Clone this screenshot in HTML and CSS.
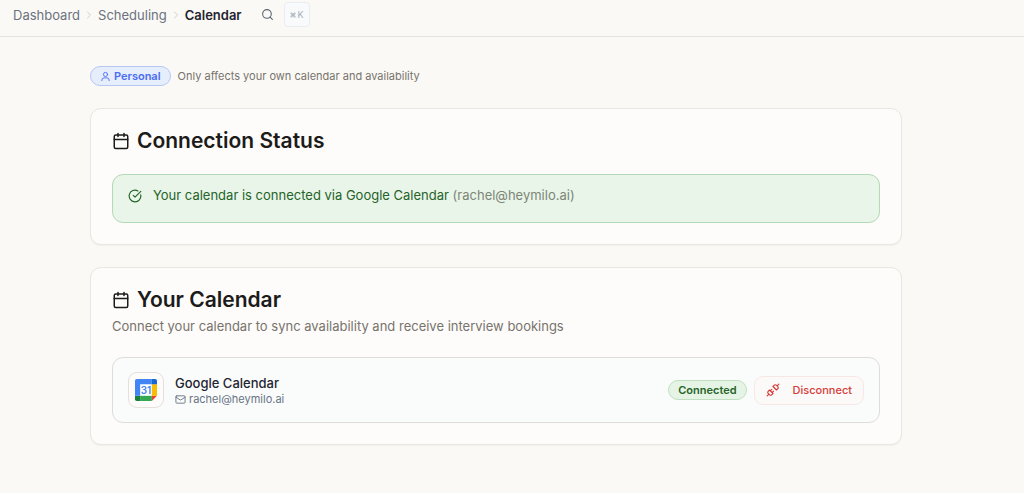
FILE: index.html
```
<!DOCTYPE html>
<html lang="en">
<head>
<meta charset="UTF-8">
<meta name="viewport" content="width=device-width, initial-scale=1.0">
<title>Calendar</title>
<link rel="stylesheet" href="styles.css">
</head>
<body>

<header class="topbar">
  <nav class="breadcrumb" aria-label="Breadcrumb">
    <a href="#">Dashboard</a>
    <svg class="chevron" viewBox="0 0 24 24"><path d="m9 18 6-6-6-6"/></svg>
    <a href="#">Scheduling</a>
    <svg class="chevron" viewBox="0 0 24 24"><path d="m9 18 6-6-6-6"/></svg>
    <a href="#" class="current" aria-current="page">Calendar</a>
  </nav>
  <button class="search" aria-label="Search">
    <svg class="icon-search" viewBox="0 0 24 24"><circle cx="11" cy="11" r="8"/><path d="m21 21-4.3-4.3"/></svg>
    <kbd>
      <svg class="icon-command" viewBox="0 0 24 24"><path d="M15 6v12a3 3 0 1 0 3-3H6a3 3 0 1 0 3 3V6a3 3 0 1 0-3 3h12a3 3 0 1 0-3-3"/></svg>
      <span>K</span>
    </kbd>
  </button>
</header>

<main class="page">
  <div class="container">
    <div class="scope">
      <span class="badge badge-personal">
        <svg class="icon-user" viewBox="0 0 24 24"><circle cx="12" cy="7.5" r="4.5"/><path d="M20 21v-1a5 5 0 0 0-5-5H9a5 5 0 0 0-5 5v1"/></svg>
        Personal
      </span>
      <span class="scope-text">Only affects your own calendar and availability</span>
    </div>

    <section class="card">
      <h2>
        <svg class="icon-calendar" viewBox="0 0 24 24"><path d="M8 2v4M16 2v4M3 10h18"/><rect x="3" y="4" width="18" height="18" rx="2"/></svg>
        Connection Status
      </h2>
      <div class="alert">
        <svg class="icon-check" viewBox="0 0 24 24"><path d="M21.8 10A10 10 0 1 1 17 3.3"/><path d="m9 11 3 3L22 4"/></svg>
        <p>Your calendar is connected via Google Calendar <span>(rachel@heymilo.ai)</span></p>
      </div>
    </section>

    <section class="card">
      <h2>
        <svg class="icon-calendar" viewBox="0 0 24 24"><path d="M8 2v4M16 2v4M3 10h18"/><rect x="3" y="4" width="18" height="18" rx="2"/></svg>
        Your Calendar
      </h2>
      <p class="description">Connect your calendar to sync availability and receive interview bookings</p>
      <div class="account">
        <div class="logo">
          <svg class="google-calendar" viewBox="0 0 200 200">
            <path fill="#fff" d="M47 47h106v106H47z"/>
            <path fill="#ea4335" d="M153 200l47-47h-47z"/>
            <path fill="#fbbc04" d="M200 47h-47v106h47z"/>
            <path fill="#34a853" d="M153 153H47v47h106z"/>
            <path fill="#188038" d="M0 153v31a16 16 0 0 0 16 16h31v-47z"/>
            <path fill="#1967d2" d="M200 47V16a16 16 0 0 0-16-16h-31v47z"/>
            <path fill="#4285f4" d="M153 0H16A16 16 0 0 0 0 16v137h47V47h106z"/>
            <text x="100" y="132" text-anchor="middle">31</text>
          </svg>
        </div>
        <div class="account-info">
          <h3>Google Calendar</h3>
          <p>
            <svg class="icon-mail" viewBox="0 0 24 24"><rect x="2" y="4" width="20" height="16" rx="2"/><path d="m22 7-9 5.700a2 2 0 0 1-2 0L2 7"/></svg>
            rachel@heymilo.ai
          </p>
        </div>
        <div class="actions">
          <span class="badge badge-connected">Connected</span>
          <button class="disconnect">
            <svg class="icon-unplug" viewBox="0 0 24 24"><path d="m19 5 3-3M2 22l3-3M6.300 20.300a2.400 2.400 0 0 0 3.400 0L12 18l-6-6-2.300 2.300a2.400 2.400 0 0 0 0 3.400ZM7.500 13.500 10 11M10.500 16.500 13 14M12 6l6 6 2.300-2.300a2.400 2.400 0 0 0 0-3.400l-2.600-2.600a2.400 2.400 0 0 0-3.400 0Z"/></svg>
            Disconnect
          </button>
        </div>
      </div>
    </section>
  </div>
</main>

</body>
</html>
```

FILE: styles.css
```
* {
  box-sizing: border-box;
}

body {
  margin: 0;
  background-color: #faf9f5;
  color: #1c1b1a;
  font-family: Inter, "Liberation Sans", sans-serif;
  font-size: 13px;
  line-height: 18px;
}

h2, h3, p {
  margin: 0;
}

button {
  font-family: inherit;
  cursor: pointer;
}

svg {
  flex: none;
  fill: none;
  stroke: currentColor;
  stroke-width: 2;
  stroke-linecap: round;
  stroke-linejoin: round;
}

.topbar {
  display: flex;
  align-items: center;
  gap: 19px;
  padding: 2px 14px 9px 13px;
  border-bottom: 1px solid #e6e4df;
}

.breadcrumb {
  display: flex;
  align-items: center;
  gap: 3px;
}

.breadcrumb a {
  color: #6b7280;
  text-decoration: none;
}

.breadcrumb .current {
  color: #1f2430;
  font-weight: 600;
}

.chevron {
  width: 12px;
  height: 12px;
  color: #cfd1d4;
}

.search {
  display: flex;
  align-items: center;
  gap: 10px;
  padding: 0;
  border: none;
  background: none;
  color: #5b6472;
}

.icon-search {
  width: 13px;
  height: 13px;
}

kbd {
  display: flex;
  align-items: center;
  justify-content: center;
  gap: 2px;
  width: 26px;
  height: 25px;
  border: 1px solid #e9edf2;
  border-radius: 4px;
  background-color: #f9fafb;
  color: #a3adba;
  font-family: inherit;
  font-size: 9px;
}

.icon-command {
  width: 6px;
  height: 6px;
  stroke-width: 3;
}

.page {
  padding: 29px 32px 47px 0;
}

.container {
  display: flex;
  flex-direction: column;
  gap: 22px;
  max-width: 812px;
  margin: 0 auto;
}

.scope {
  display: flex;
  align-items: center;
  gap: 7px;
}

.scope-text {
  color: #78736d;
  font-size: 11px;
}

.badge {
  display: flex;
  align-items: center;
  gap: 3px;
  height: 20px;
  padding: 0 9px;
  border: 1px solid;
  border-radius: 10px;
  font-size: 11px;
  font-weight: 600;
}

.badge-personal {
  border-color: #b4c7f5;
  background-color: #e6eefc;
  color: #4a6cf0;
}

.icon-user {
  width: 11px;
  height: 11px;
}

.card {
  padding: 21px;
  border: 1px solid #e9e7e2;
  border-radius: 11px;
  background-color: #fdfcfa;
  box-shadow: 0 1px 2px rgba(0, 0, 0, 0.04);
}

.card h2 {
  display: flex;
  align-items: center;
  gap: 7px;
  font-size: 21px;
  font-weight: 600;
  line-height: 22px;
}

.icon-calendar {
  width: 18px;
  height: 18px;
}

.alert {
  display: flex;
  gap: 11px;
  margin-top: 22px;
  padding: 11px 15px 18px;
  border: 1px solid #b3d9b5;
  border-radius: 11px;
  background-color: #e9f5e9;
  color: #256329;
}

.alert span {
  color: #7c8578;
}

.icon-check {
  width: 14px;
  height: 14px;
  margin-top: 3px;
}

.description {
  margin-top: 6px;
  color: #78736d;
}

.account {
  display: flex;
  align-items: center;
  gap: 11px;
  margin-top: 22px;
  padding: 14px 15px;
  border: 1px solid #dedcd8;
  border-radius: 11px;
  background-color: #fafcfb;
}

.logo {
  display: flex;
  align-items: center;
  justify-content: center;
  width: 36px;
  height: 36px;
  border: 1px solid #e6dfda;
  border-radius: 9px;
  background-color: #fdfcfb;
}

.google-calendar {
  width: 22px;
  height: 22px;
  stroke: none;
}

.google-calendar text {
  fill: #4285f4;
  font-size: 90px;
  font-weight: 600;
}

.account-info h3 {
  color: #1f2433;
  font-size: 13px;
  font-weight: 500;
}

.account-info p {
  display: flex;
  align-items: center;
  gap: 3px;
  color: #697386;
  font-size: 11px;
  line-height: 14px;
}

.icon-mail {
  width: 11px;
  height: 11px;
}

.actions {
  display: flex;
  align-items: center;
  gap: 7px;
  margin-left: auto;
}

.badge-connected {
  border-color: #c0dfc1;
  background-color: #e5f4e5;
  color: #256329;
}

.disconnect {
  display: flex;
  align-items: center;
  gap: 13px;
  height: 29px;
  padding: 0 11px;
  border: 1px solid #f8e8e5;
  border-radius: 9px;
  background-color: #fcfaf8;
  color: #d63a3a;
  font-size: 11px;
  font-weight: 500;
}

.icon-unplug {
  width: 14px;
  height: 14px;
}
```
